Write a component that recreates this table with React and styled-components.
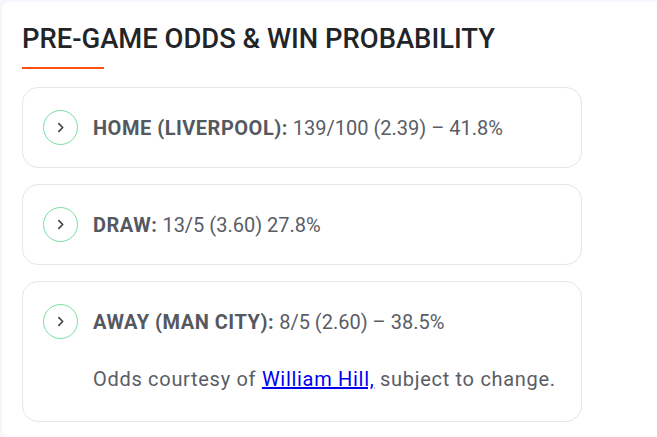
import styled, { createGlobalStyle } from 'styled-components';

const GlobalStyle = createGlobalStyle`
  body {
    margin: 0;
    background: #f5f7fc;
    font-family: Roboto, "Liberation Sans", sans-serif;
  }
`;

const Panel = styled.section`
  margin: 2px 0 2px 2px;
  background: #ffffff;
  border-radius: 8px 0 0 8px;
  padding: 20px 75px 15px 20px;
  min-height: 433px;
  box-sizing: border-box;
`;

const Heading = styled.h2`
  margin: 0;
  font-size: 27.4px;
  font-weight: 500;
  color: #222428;
  line-height: 34px;
`;

const Underline = styled.div`
  width: 82px;
  height: 2px;
  background: #ff4f12;
  margin: 11px 0 18px;
`;

const List = styled.div`
  display: flex;
  flex-direction: column;
  gap: 16px;
`;

const Card = styled.div`
  border: 1px solid #e4e6ea;
  border-radius: 16px;
  padding: 22px 20px 22px;
  display: flex;
  flex-direction: column;
  gap: 28px;
`;

const Row = styled.div`
  display: flex;
  align-items: center;
  gap: 15px;
`;

const Toggle = styled.span`
  width: 33px;
  height: 33px;
  border: 1px solid #79dea0;
  border-radius: 50%;
  display: flex;
  align-items: center;
  justify-content: center;
  color: #45484f;
  flex-shrink: 0;
`;

const Line = styled.p`
  margin: 0;
  font-size: 20px;
  color: #5a5d66;
  line-height: 24px;

  strong {
    font-weight: 700;
    letter-spacing: 0.5px;
    color: #55585f;
  }
`;

const Note = styled.p`
  margin: 0 0 8px 50px;
  font-size: 20px;
  letter-spacing: 0.7px;
  color: #5a5d66;
  line-height: 24px;

  a {
    color: #0000ee;
  }
`;

const Chevron = () => (
  <svg width="11" height="11" viewBox="0 0 10 10" fill="none">
    <path d="M3.5 1.5 L7 5 L3.5 8.5" stroke="currentColor" strokeWidth="1.6" strokeLinecap="round" strokeLinejoin="round" />
  </svg>
);

const outcomes = [
  { label: 'HOME (LIVERPOOL):', odds: '139/100 (2.39) – 41.8%' },
  { label: 'DRAW:', odds: '13/5 (3.60) 27.8%' },
  { label: 'AWAY (MAN CITY):', odds: '8/5 (2.60) – 38.5%', note: true },
];

export default function App() {
  return (
    <>
      <GlobalStyle />
      <Panel>
        <Heading>PRE-GAME ODDS &amp; WIN PROBABILITY</Heading>
        <Underline />
        <List>
          {outcomes.map((o) => (
            <Card key={o.label}>
              <Row>
                <Toggle><Chevron /></Toggle>
                <Line><strong>{o.label}</strong> {o.odds}</Line>
              </Row>
              {o.note && (
                <Note>
                  Odds courtesy of <a href="#">William Hill,</a> subject to change.
                </Note>
              )}
            </Card>
          ))}
        </List>
      </Panel>
    </>
  );
}
